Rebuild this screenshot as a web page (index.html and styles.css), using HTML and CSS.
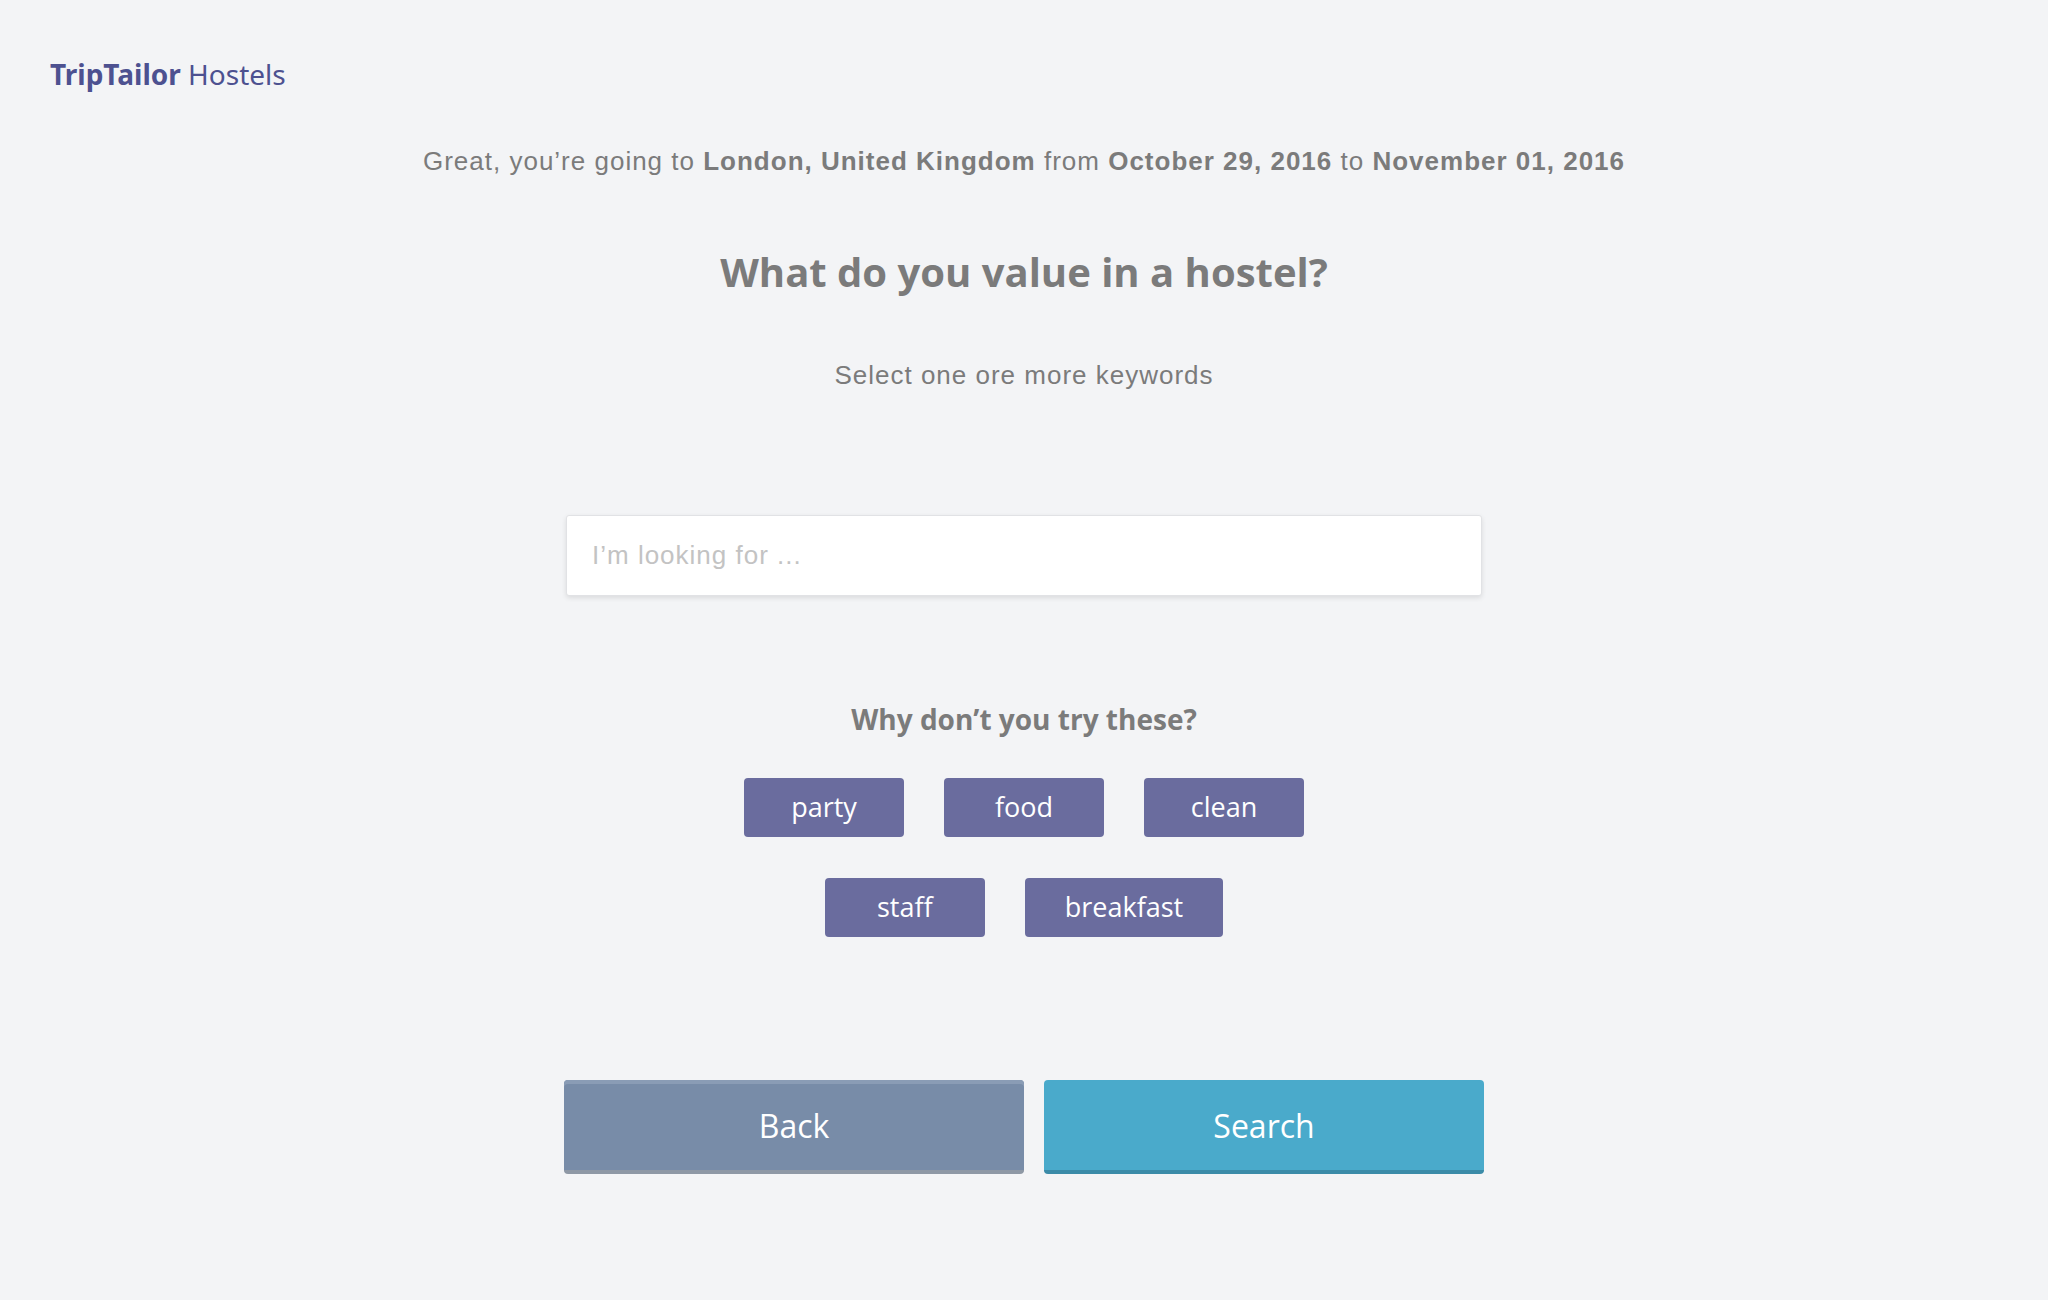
FILE: index.html
```html
<!DOCTYPE html>
<html lang="en">
<head>
<meta charset="utf-8">
<title>TripTailor Hostels</title>
<link rel="stylesheet" href="styles.css">
</head>
<body>
<header class="header">
  <div class="logo"><span class="logo-bold">TripTailor</span> Hostels</div>
</header>
<main class="main">
  <p class="trip">Great, you’re going to <b>London, United Kingdom</b> from <b>October 29, 2016</b> to <b>November 01, 2016</b></p>
  <h1 class="title">What do you value in a hostel?</h1>
  <p class="hint">Select one ore more keywords</p>
  <input class="search-input" type="text" placeholder="I’m looking for ...">
  <h2 class="suggest-title">Why don’t you try these?</h2>
  <div class="tags">
    <button class="tag">party</button>
    <button class="tag">food</button>
    <button class="tag">clean</button>
    <button class="tag">staff</button>
    <button class="tag">breakfast</button>
  </div>
  <div class="actions">
    <button class="btn btn-back">Back</button>
    <button class="btn btn-search">Search</button>
  </div>
</main>
</body>
</html>
```
FILE: styles.css
```css
html, body {
  margin: 0;
  padding: 0;
}
body {
  background: #f3f4f6;
  width: 2048px;
  min-height: 1300px;
}
.header {
  padding: 54px 50px 0;
}
.logo {
  font-family: "Noto Sans", sans-serif;
  font-size: 28px;
  line-height: 40px;
  color: #4d5190;
}
.logo-bold {
  font-weight: 700;
}
.main {
  display: flex;
  flex-direction: column;
  align-items: center;
}
.trip {
  margin: 52px 0 0;
  font-family: "Liberation Sans", Arial, sans-serif;
  font-size: 26px;
  line-height: 30px;
  letter-spacing: 1px;
  color: #7b7b7b;
}
.trip b {
  font-weight: 700;
}
.title {
  margin: 72px 0 0;
  font-family: "Open Sans", sans-serif;
  font-weight: 700;
  font-size: 40px;
  line-height: 48px;
  color: #7b7b7b;
}
.hint {
  margin: 64px 0 0;
  font-family: "Liberation Sans", Arial, sans-serif;
  font-size: 26px;
  line-height: 30px;
  letter-spacing: 1px;
  color: #7b7b7b;
}
.search-input {
  box-sizing: border-box;
  margin: 125px 0 0;
  width: 916px;
  height: 81px;
  padding: 0 25px;
  border: 1px solid #e1e2e5;
  border-radius: 3px;
  background: #ffffff;
  box-shadow: 0 2px 5px rgba(0, 0, 0, 0.1);
  font-family: "Liberation Sans", Arial, sans-serif;
  font-size: 26px;
  letter-spacing: 1px;
  color: #555;
  outline: none;
}
.search-input::placeholder {
  color: #c3c3c3;
}
.suggest-title {
  margin: 106px 0 0;
  font-family: "Open Sans", sans-serif;
  font-weight: 700;
  font-size: 28px;
  line-height: 34px;
  color: #7b7b7b;
}
.tags {
  margin-top: 42px;
  width: 640px;
  display: flex;
  flex-wrap: wrap;
  justify-content: center;
  column-gap: 40px;
  row-gap: 41px;
}
.tag {
  box-sizing: border-box;
  min-width: 160px;
  height: 59px;
  padding: 0 40px 2px;
  border: none;
  border-radius: 4px;
  background: #6a6c9e;
  color: #ffffff;
  font-family: "Open Sans", sans-serif;
  font-size: 27px;
  line-height: 57px;
}
.actions {
  margin-top: 143px;
  display: flex;
  gap: 20px;
}
.btn {
  box-sizing: border-box;
  height: 94px;
  border: none;
  border-radius: 4px;
  color: #ffffff;
  font-family: "Open Sans", sans-serif;
  font-size: 32px;
  display: flex;
  align-items: center;
  justify-content: center;
}
.btn-back {
  width: 460px;
  background: #788ca8;
  box-shadow: inset 0 4px 0 #8a9cb5;
  border-bottom: 4px solid #8e98a5;
}
.btn-search {
  width: 440px;
  background: #4aaacb;
  border-bottom: 4px solid #3b8ba8;
}
```
